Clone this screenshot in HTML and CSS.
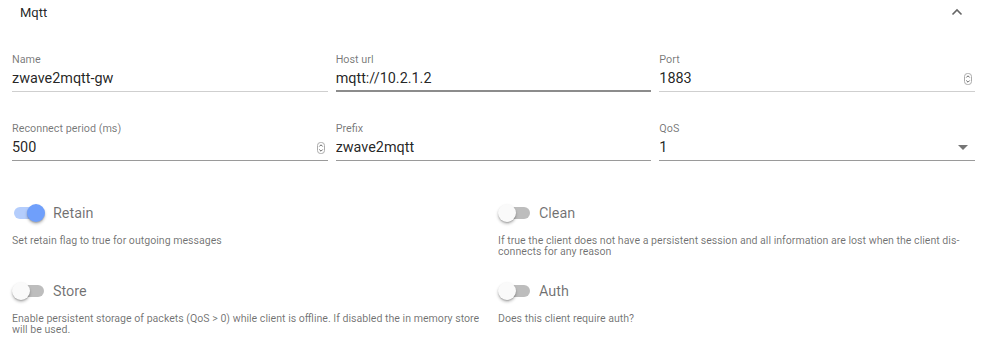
FILE: index.html
```html
<!DOCTYPE html>
<html lang="en">
<head>
    <meta charset="UTF-8">
    <meta name="viewport" content="width=device-width, initial-scale=1.0">
    <title>Settings - Mqtt</title>
    <link rel="stylesheet" href="styles.css">
</head>
<body>
    <div class="panel">
        <div class="panel-header">
            <span class="panel-title">Mqtt</span>
            <svg class="chevron" width="12" height="8" viewBox="0 0 12 8">
                <path d="M1.5 6.5 L6 2 L10.5 6.5" fill="none" stroke="#666" stroke-width="1.6"/>
            </svg>
        </div>
        <div class="panel-body">
            <div class="fields">
                <div class="field">
                    <label class="field-label">Name</label>
                    <div class="field-input"><input type="text" value="zwave2mqtt-gw"></div>
                </div>
                <div class="field hover">
                    <label class="field-label">Host url</label>
                    <div class="field-input"><input type="text" value="mqtt://10.2.1.2"></div>
                </div>
                <div class="field">
                    <label class="field-label">Port</label>
                    <div class="field-input">
                        <input type="text" value="1883">
                        <svg class="spin" width="8" height="12" viewBox="0 0 8 12">
                            <rect x="0.5" y="0.5" width="7" height="11" rx="3" fill="#fff" stroke="#aaa"/>
                            <path d="M2.3 4.5 L4 2.8 L5.7 4.5 M2.3 7.5 L4 9.2 L5.7 7.5" fill="none" stroke="#555" stroke-width="0.9"/>
                        </svg>
                    </div>
                </div>
                <div class="field dark">
                    <label class="field-label">Reconnect period (ms)</label>
                    <div class="field-input">
                        <input type="text" value="500">
                        <svg class="spin" width="8" height="12" viewBox="0 0 8 12">
                            <rect x="0.5" y="0.5" width="7" height="11" rx="3" fill="#fff" stroke="#aaa"/>
                            <path d="M2.3 4.5 L4 2.8 L5.7 4.5 M2.3 7.5 L4 9.2 L5.7 7.5" fill="none" stroke="#555" stroke-width="0.9"/>
                        </svg>
                    </div>
                </div>
                <div class="field dark">
                    <label class="field-label">Prefix</label>
                    <div class="field-input"><input type="text" value="zwave2mqtt"></div>
                </div>
                <div class="field dark">
                    <label class="field-label">QoS</label>
                    <div class="field-input">
                        <input type="text" value="1" readonly>
                        <svg class="caret" width="10" height="5" viewBox="0 0 10 5">
                            <path d="M0 0 L10 0 L5 5 Z" fill="#757575"/>
                        </svg>
                    </div>
                </div>
            </div>

            <div class="switches">
                <div class="switch-block">
                    <div class="switch-row">
                        <span class="toggle on"><span class="track"></span><span class="thumb"></span></span>
                        <span class="switch-label">Retain</span>
                    </div>
                    <p class="hint">Set retain flag to true for outgoing messages</p>
                </div>
                <div class="switch-block">
                    <div class="switch-row">
                        <span class="toggle"><span class="track"></span><span class="thumb"></span></span>
                        <span class="switch-label">Clean</span>
                    </div>
                    <p class="hint">If true the client does not have a persistent session and all information are lost when the client dis&shy;connects for any reason</p>
                </div>
                <div class="switch-block">
                    <div class="switch-row">
                        <span class="toggle"><span class="track"></span><span class="thumb"></span></span>
                        <span class="switch-label">Store</span>
                    </div>
                    <p class="hint">Enable persistent storage of packets (QoS &gt; 0) while client is offline. If disabled the in memory store will be used.</p>
                </div>
                <div class="switch-block">
                    <div class="switch-row">
                        <span class="toggle"><span class="track"></span><span class="thumb"></span></span>
                        <span class="switch-label">Auth</span>
                    </div>
                    <p class="hint">Does this client require auth?</p>
                </div>
            </div>
        </div>
    </div>
</body>
</html>
```

FILE: styles.css
```css
body {
    margin: 0;
    font-family: Roboto, "Liberation Sans", sans-serif;
    background-color: #fff;
    color: rgba(0, 0, 0, 0.87);
}
.panel {
    width: 1000px;
    height: 344px;
    overflow: hidden;
}
.panel-header {
    height: 46px;
    display: flex;
    align-items: flex-start;
    justify-content: space-between;
    padding: 5px 37px 0 20px;
    box-sizing: border-box;
}
.panel-title {
    font-size: 13px;
    line-height: 16px;
}
.chevron {
    margin-top: 3px;
}
.panel-body {
    padding: 0 25px 0 12px;
}
.fields {
    display: grid;
    grid-template-columns: 1fr 1fr 1fr;
    column-gap: 8px;
    row-gap: 30px;
    padding-top: 7px;
}
.field-label {
    display: block;
    font-size: 10.8px;
    line-height: 13px;
    color: rgba(0, 0, 0, 0.54);
}
.field-input {
    display: flex;
    align-items: center;
    height: 25px;
    border-bottom: 1px solid #cfcfcf;
}
.field.dark .field-input {
    border-bottom-color: #9a9a9a;
}
.field.hover .field-input {
    border-bottom: 2px solid #8c8c8c;
    height: 24px;
}
.field-input input {
    flex: 1;
    min-width: 0;
    border: none;
    outline: none;
    padding: 0;
    margin: 0;
    background: transparent;
    font-family: inherit;
    font-size: 14.4px;
    color: rgba(0, 0, 0, 0.87);
}
.spin {
    margin-right: 3px;
}
.caret {
    margin-right: 7px;
}
.switches {
    display: grid;
    grid-template-columns: 1fr 1fr;
    column-gap: 9px;
    row-gap: 22px;
    margin-top: 40px;
}
.switch-row {
    display: flex;
    align-items: center;
    height: 24px;
}
.toggle {
    position: relative;
    width: 34px;
    height: 24px;
    margin-right: 7px;
    flex: none;
}
.toggle .track {
    position: absolute;
    left: 2px;
    top: 6px;
    width: 30px;
    height: 12px;
    border-radius: 6px;
    background-color: #bdbdbd;
}
.toggle .thumb {
    position: absolute;
    left: 0;
    top: 3px;
    width: 18px;
    height: 18px;
    border-radius: 50%;
    background-color: #fafafa;
    box-shadow: 0 2px 3px rgba(0, 0, 0, 0.25), 0 1px 1px rgba(0, 0, 0, 0.14);
}
.toggle.on .track {
    background-color: #b4cdfc;
}
.toggle.on .thumb {
    left: 15px;
    background-color: #6f9ffb;
}
.switch-label {
    font-size: 14.4px;
    color: rgba(0, 0, 0, 0.56);
}
.hint {
    margin: 10px 0 0 0;
    font-size: 10.6px;
    line-height: 11px;
    color: rgba(0, 0, 0, 0.56);
}
```
